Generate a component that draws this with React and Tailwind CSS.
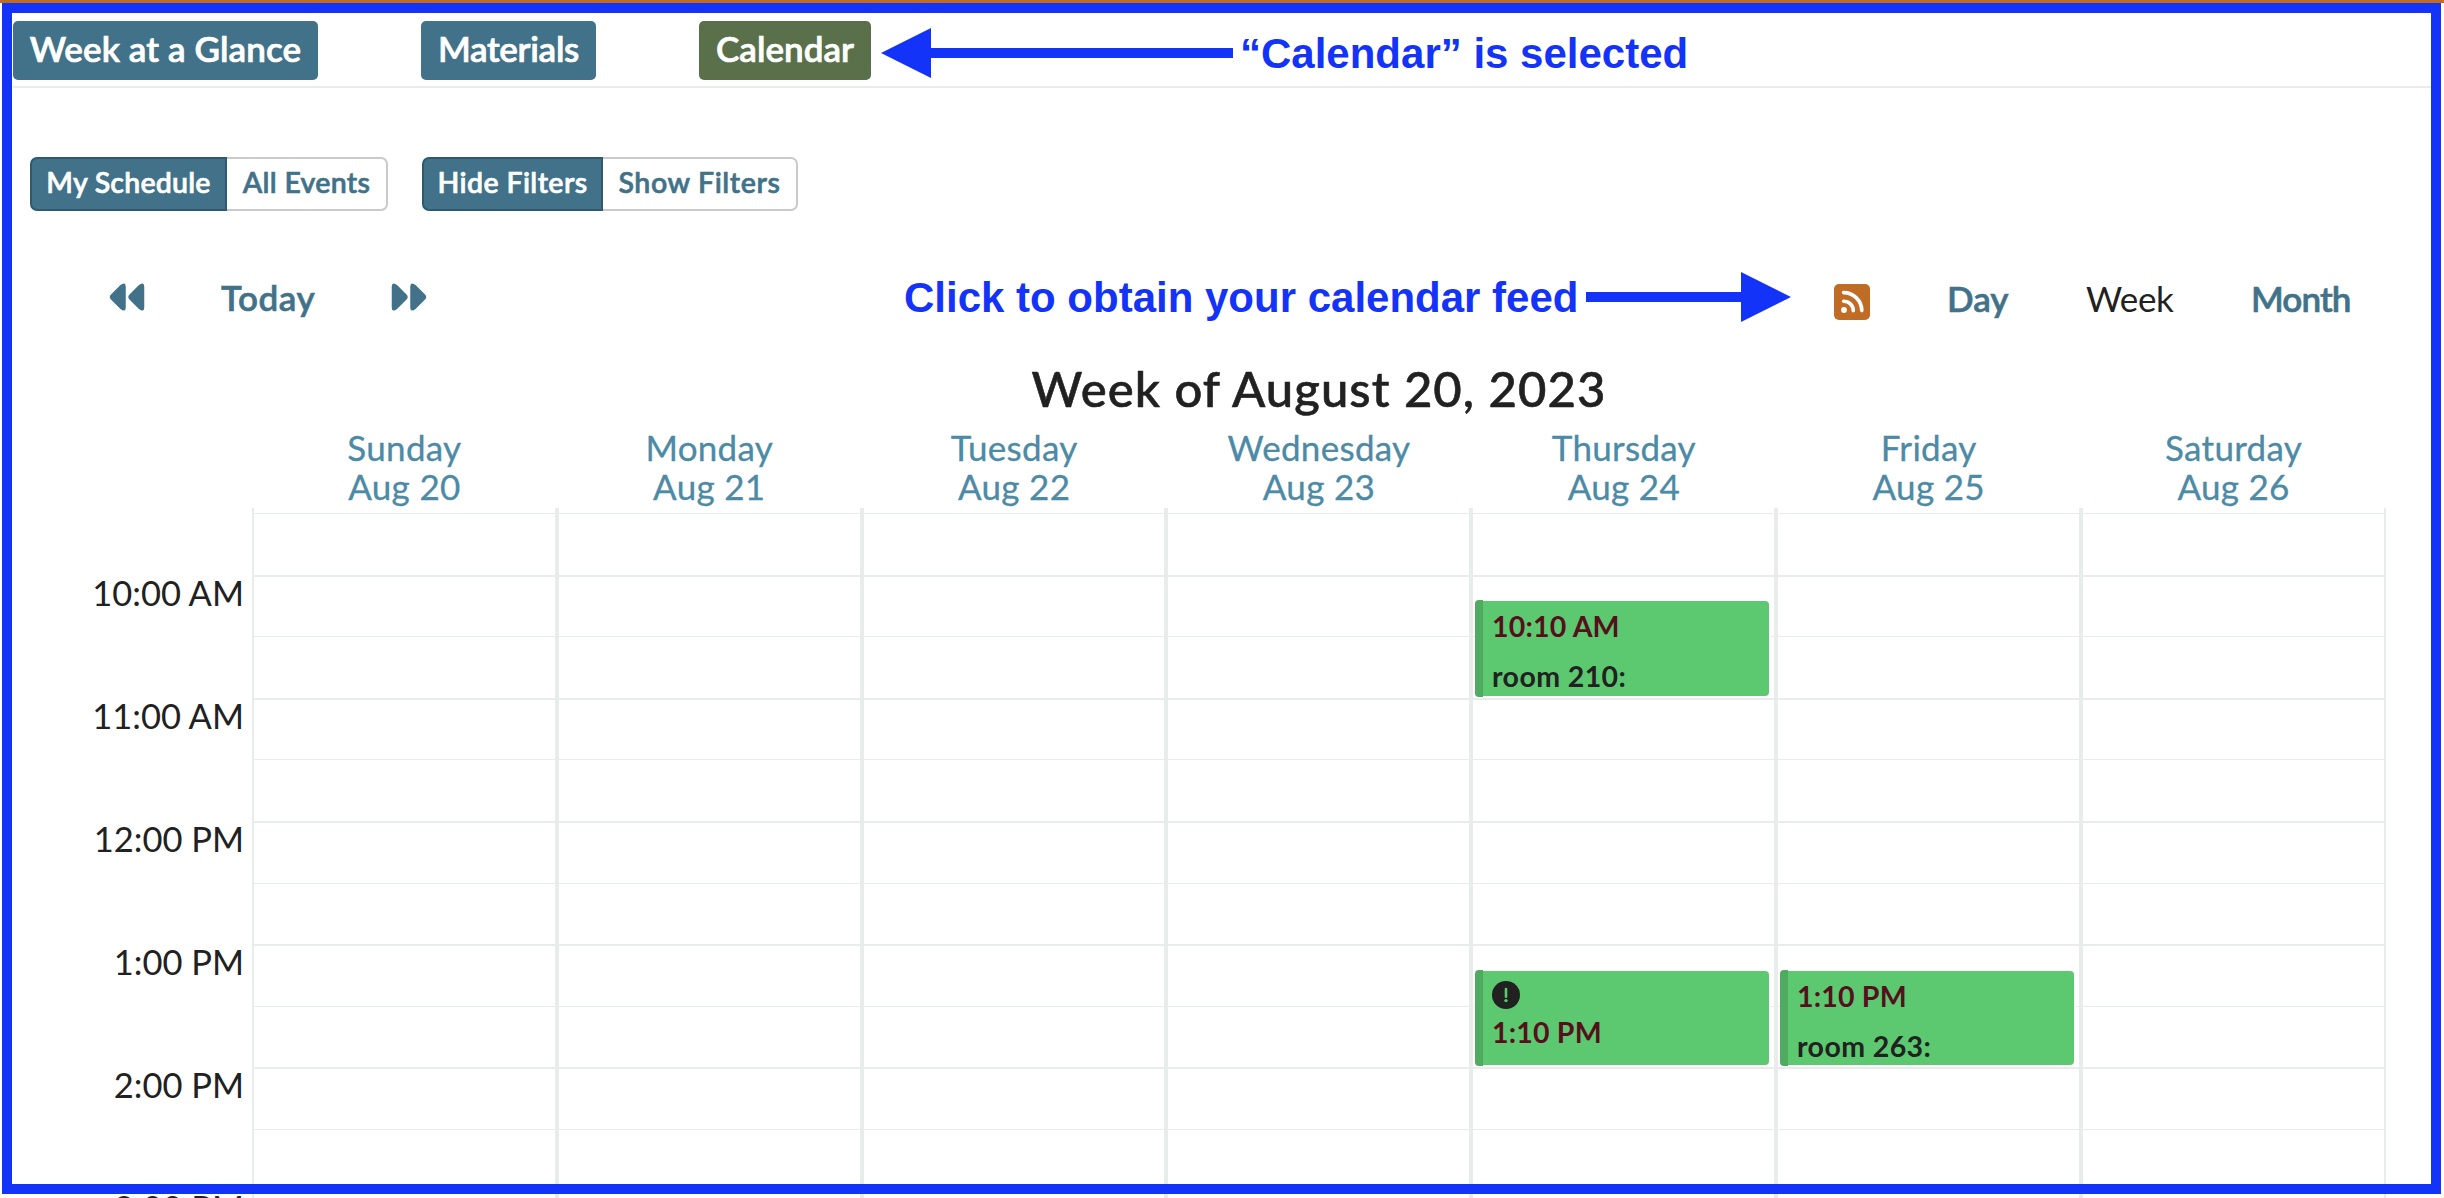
import React from "react";

const DAYS = [
  { name: "Sunday", date: "Aug 20", width: "w-[305px] border-r-4" },
  { name: "Monday", date: "Aug 21", width: "w-[305px] border-r-4" },
  { name: "Tuesday", date: "Aug 22", width: "w-[304px] border-r-4" },
  { name: "Wednesday", date: "Aug 23", width: "w-[305px] border-r-4" },
  {
    name: "Thursday",
    date: "Aug 24",
    width: "w-[305px] border-r-4",
    events: [
      { time: "10:10 AM", room: "room 210:", place: "top-[92px] h-[97px]" },
      { time: "1:10 PM", alert: true, place: "top-[462px] h-[96px]" },
    ],
  },
  {
    name: "Friday",
    date: "Aug 25",
    width: "w-[305px] border-r-4",
    events: [{ time: "1:10 PM", room: "room 263:", place: "top-[462px] h-[96px]" }],
  },
  { name: "Saturday", date: "Aug 26", width: "w-[303px] border-r-2" },
];

// Each hour is drawn as two half-hour slots.
const SLOTS = [
  "h-[62px] border-t",
  "h-[61px] border-t-2",
  "h-[62px] border-t",
  "h-[61px] border-t-2",
  "h-[62px] border-t",
  "h-[62px] border-t-2",
  "h-[61px] border-t",
  "h-[62px] border-t-2",
  "h-[61px] border-t",
  "h-[62px] border-t-2",
  "h-[61px] border-t",
  "h-[62px] border-t-2",
];

const HOURS = ["10:00 AM", "11:00 AM", "12:00 PM", "1:00 PM", "2:00 PM", "3:00 PM"];

function TabButton({ children, className }) {
  return (
    <button
      className={`flex h-[59px] items-center justify-center rounded-[5px] pb-[5px] text-[35px] font-semibold text-white [-webkit-text-stroke:0.7px] ${className}`}
    >
      {children}
    </button>
  );
}

function Segment({ on, off, onWidth, offWidth }) {
  return (
    <div className="flex h-[54px] text-[28.5px] font-semibold [-webkit-text-stroke:0.6px]">
      <button
        className={`flex items-center justify-center rounded-l-[7px] border-2 border-[#2f5a6e] bg-[#417289] pb-[3px] text-white ${onWidth}`}
      >
        {on}
      </button>
      <button
        className={`flex items-center justify-center rounded-r-[7px] border-2 border-l-0 border-[#cacaca] bg-white pb-[3px] text-[#417289] ${offWidth}`}
      >
        {off}
      </button>
    </div>
  );
}

function SkipIcon({ className }) {
  return (
    <svg viewBox="0 0 36 28" className={`h-7 w-9 ${className}`} fill="#417289" stroke="#417289" strokeWidth="1.5" strokeLinejoin="round">
      <path d="M1.5 14 Q1.5 13 2.5 12 L12 2.6 Q16 -0.5 16 3.5 V24.5 Q16 28.5 12 25.4 L2.5 16 Q1.5 15 1.5 14 Z" />
      <path d="M20 14 Q20 13 21 12 L30.5 2.6 Q34.5 -0.5 34.5 3.5 V24.5 Q34.5 28.5 30.5 25.4 L21 16 Q20 15 20 14 Z" />
    </svg>
  );
}

function FeedIcon() {
  return (
    <svg viewBox="0 0 36 36" className="h-9 w-9" fill="none" stroke="#fff" strokeWidth="3.6" strokeLinecap="round">
      <rect width="36" height="36" rx="5" fill="#c06c24" stroke="none" />
      <circle cx="10" cy="26" r="2.9" fill="#fff" stroke="none" />
      <path d="M9.6 17.2 A9.6 9.6 0 0 1 19.3 26.6" />
      <path d="M9.6 8.6 A18.2 18.2 0 0 1 27.8 26.6" />
    </svg>
  );
}

function AlertIcon() {
  return (
    <svg viewBox="0 0 28 28" className="block h-7 w-7">
      <circle cx="14" cy="14" r="14" fill="#212121" />
      <path d="M14 8 V15.8" stroke="#5cc971" strokeWidth="2.6" strokeLinecap="round" />
      <circle cx="14" cy="19.6" r="1.7" fill="#5cc971" />
    </svg>
  );
}

function EventCard({ event }) {
  return (
    <div className={`absolute left-[2px] flex w-[294px] ${event.place}`}>
      <div className="w-2 rounded-l-[4px] bg-[#4fab60]" />
      <div className="my-px flex flex-1 flex-col rounded-r-[4px] bg-[#5cc971] pl-[9px] text-[28.5px] font-bold leading-[34px] shadow-[2px_0_0_#fff]">
        {event.alert && (
          <div className="pt-2.5">
            <AlertIcon />
          </div>
        )}
        <div className={`tracking-[0.2px] text-[#55101d] ${event.alert ? "pt-[6px]" : "pt-2"}`}>{event.time}</div>
        {event.room && <div className="pt-4 tracking-[0.4px] text-[#212121]">{event.room}</div>}
      </div>
    </div>
  );
}

export default function App() {
  return (
    <div className="relative h-[1198px] w-[2444px] overflow-hidden bg-white font-['Lato',sans-serif] text-[#212121]">
      <div className="h-[3px] bg-[#c06c24]" />

      <header className="ml-[13px] flex h-[85px] w-[2418px] items-start border-b-2 border-[#e8eceb] pt-[18px]">
        <TabButton className="w-[305px] bg-[#417289] tracking-[0.1px]">Week at a Glance</TabButton>
        <TabButton className="ml-[103px] w-[175px] bg-[#417289] tracking-[-0.3px]">Materials</TabButton>
        <TabButton className="ml-[103px] w-[172px] bg-[#5a704a]">Calendar</TabButton>
        <div className="ml-[10px] mt-[7px] flex text-[#1433f9]">
          <svg viewBox="0 0 352 50" className="h-[50px] w-[352px]" fill="currentColor">
            <path d="M0 25 L50 0 V20 H352 V30 H50 V50 Z" />
          </svg>
          <div className="ml-[7px] whitespace-nowrap pt-px font-['Liberation_Sans',sans-serif] text-[42px] font-bold leading-[50px]">
            “Calendar” is selected
          </div>
        </div>
      </header>

      <div className="ml-[30px] mt-[69px] flex gap-[34px]">
        <Segment on="My Schedule" off="All Events" onWidth="w-[197px] tracking-[0.2px]" offWidth="w-[161px] tracking-[0.3px]" />
        <Segment on="Hide Filters" off="Show Filters" onWidth="w-[181px] tracking-[0.4px]" offWidth="w-[195px] tracking-[0.6px]" />
      </div>

      <nav className="mt-[61px] flex h-[50px] items-center text-[35px] font-semibold leading-[50px] text-[#417289]">
        <SkipIcon className="ml-[109px]" />
        <div className="ml-[76px] w-[98px] whitespace-nowrap tracking-[0.5px] [-webkit-text-stroke:0.6px]">Today</div>
        <SkipIcon className="ml-[72px] rotate-180" />
        <div className="ml-[477px] flex w-[887px] text-[#1433f9]">
          <div className="w-[682px] whitespace-nowrap pt-px font-['Liberation_Sans',sans-serif] text-[42px] font-bold">
            Click to obtain your calendar feed
          </div>
          <svg viewBox="0 0 205 50" className="h-[50px] w-[205px]" fill="currentColor">
            <path d="M205 25 L155 0 V20 H0 V30 H155 V50 Z" />
          </svg>
        </div>
        <div className="ml-[43px] pt-[9px]">
          <FeedIcon />
        </div>
        <div className="ml-[77px] w-[139px] pt-[2px] [-webkit-text-stroke:0.6px]">Day</div>
        <div className="w-[165px] pt-[2px] font-normal tracking-[-0.4px] text-[#212121]">Week</div>
        <div className="pt-[2px] tracking-[-0.9px] [-webkit-text-stroke:0.6px]">Month</div>
      </nav>

      <h1 className="ml-[252px] mt-[38px] w-[2134px] text-center text-[49px] font-medium leading-[56px] tracking-[1.05px] [-webkit-text-stroke:0.6px]">
        Week of August 20, 2023
      </h1>

      <div className="ml-[252px] mt-[12px] grid w-[2134px] grid-cols-7 text-center text-[35px] leading-[39px] tracking-[0.3px] text-[#4c8aa6] [-webkit-text-stroke:0.3px]">
        {DAYS.map((d) => (
          <div key={d.name}>
            <div>{d.name}</div>
            <div>{d.date}</div>
          </div>
        ))}
      </div>

      <div className="mt-[2px] flex">
        <div className="w-[252px] pr-[8px] pt-[68px] text-right text-[34.5px] leading-[33px]">
          {HOURS.map((h) => (
            <div key={h} className="h-[123px]">
              {h}
            </div>
          ))}
        </div>
        <div className="flex border-l-2 border-[#e8eceb]">
          {DAYS.map((d) => (
            <div key={d.name} className={`relative border-[#e8eceb] pt-[5px] ${d.width}`}>
              {SLOTS.map((s, i) => (
                <div key={i} className={`border-[#e8eceb] ${s}`} />
              ))}
              {(d.events || []).map((e) => (
                <EventCard key={e.place} event={e} />
              ))}
            </div>
          ))}
        </div>
      </div>

      {/* Blue annotation frame over the page */}
      <div className="pointer-events-none absolute left-[2px] top-[3px] h-[1191px] w-[2439px] border-10 border-[#1433f9]" />
    </div>
  );
}
